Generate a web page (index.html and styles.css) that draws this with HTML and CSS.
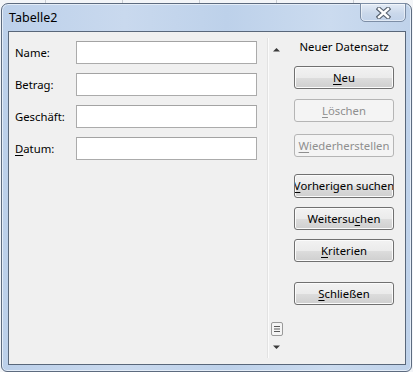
FILE: index.html
```html
<!DOCTYPE html>
<html>
<head>
    <title>Tabelle2</title>
    <link rel="stylesheet" href="styles.css">
</head>
<body>
    <div class="window">
        <div class="titlebar">
            <span class="title">Tabelle2</span>
            <button class="close" type="button">
                <svg width="15" height="12" viewBox="0 0 15 12">
                    <path d="M3 2 L12 10 M12 2 L3 10" stroke="#56616f" stroke-width="4.6" stroke-linecap="square" fill="none"/>
                    <path d="M3 2 L12 10 M12 2 L3 10" stroke="#ffffff" stroke-width="2.4" stroke-linecap="square" fill="none"/>
                </svg>
            </button>
        </div>
        <div class="client">
            <form class="record" autocomplete="off">
                <div class="row">
                    <label>Name:</label>
                    <input type="text">
                </div>
                <div class="row">
                    <label>Betrag:</label>
                    <input type="text">
                </div>
                <div class="row">
                    <label>Geschäft:</label>
                    <input type="text">
                </div>
                <div class="row">
                    <label><u>D</u>atum:</label>
                    <input type="text">
                </div>
            </form>
            <div class="scroll">
                <svg class="arrow" width="9" height="5" viewBox="0 0 9 5"><path d="M1 4.5 L4.5 1 L8 4.5 Z" fill="#3a3a3a"/></svg>
                <div class="spacer"></div>
                <svg class="thumb" width="12" height="14" viewBox="0 0 12 14">
                    <rect x="0.5" y="0.5" width="11" height="13" rx="1.5" fill="#f4f4f4" stroke="#9a9a9a"/>
                    <path d="M3 4.5 H9 M3 7 H9 M3 9.5 H9" stroke="#5a5a5a" stroke-width="1"/>
                </svg>
                <svg class="arrow down" width="9" height="5" viewBox="0 0 9 5"><path d="M1 0.5 L4.5 4 L8 0.5 Z" fill="#3a3a3a"/></svg>
            </div>
            <div class="panel">
                <div class="status">Neuer Datensatz</div>
                <button class="btn btn-new" type="button"><span><u>N</u>eu</span></button>
                <button class="btn btn-delete" type="button" disabled><span><u>L</u>öschen</span></button>
                <button class="btn btn-restore" type="button" disabled><span><u>W</u>iederherstellen</span></button>
                <button class="btn btn-prev" type="button"><span><u>V</u>orherigen suchen</span></button>
                <button class="btn btn-next" type="button"><span>Weitersu<u>c</u>hen</span></button>
                <button class="btn btn-criteria" type="button"><span><u>K</u>riterien</span></button>
                <button class="btn btn-close" type="button"><span><u>S</u>chließen</span></button>
            </div>
        </div>
    </div>
</body>
</html>
```

FILE: styles.css
```css
html, body {
    margin: 0;
    padding: 0;
}

body {
    width: 413px;
    height: 372px;
    overflow: hidden;
    background-color: #f3f5f8;
    background-image: repeating-linear-gradient(90deg, transparent 0 45px, #c9cdd3 45px 46px, transparent 46px 77px);
    font-family: "Noto Sans", "Open Sans", sans-serif;
    font-size: 11.3px;
    color: #000;
}

.window {
    box-sizing: border-box;
    width: 411px;
    height: 369px;
    margin: 3px 0 0 1px;
    border: 1px solid #5d6b7f;
    border-radius: 7px 7px 6px 6px;
    background: linear-gradient(90deg, #bcd0ea 0%, #c9d9ee 30%, #bdd1ea 55%, #cbdbef 80%, #bfd2ea 100%);
    box-shadow: inset 0 0 0 1px #e4edf8;
    display: flex;
    flex-direction: column;
}

.titlebar {
    height: 27px;
    display: flex;
    align-items: flex-start;
    padding: 0 5px 0 7px;
}

.title {
    padding-top: 6px;
    line-height: 16px;
    font-size: 12.5px;
}

.close {
    margin-left: auto;
    margin-top: -1px;
    width: 46px;
    height: 19px;
    padding: 0;
    border: 1px solid #7d8ea6;
    border-radius: 0 0 5px 5px;
    background: linear-gradient(#e3ebf6, #cad8eb 55%, #c2d3ea);
    box-shadow: inset 0 0 0 1px rgba(255, 255, 255, 0.5);
    display: flex;
    align-items: center;
    justify-content: center;
}

.client {
    box-sizing: border-box;
    width: 398px;
    height: 334px;
    margin-left: 6px;
    border: 1px solid #59677a;
    background: #f0f0f0;
    display: flex;
}

.record {
    box-sizing: border-box;
    width: 258px;
    margin: 0;
    padding: 9px 0 0 6px;
    display: flex;
    flex-direction: column;
    gap: 9px;
}

.row {
    display: flex;
    align-items: center;
    height: 23px;
}

.row label {
    width: 61px;
    padding-bottom: 1px;
}

.row input {
    box-sizing: border-box;
    width: 181px;
    height: 23px;
    margin: 0;
    border: 1px solid #ababab;
    border-top-color: #a3a3a3;
    background: #fff;
    font: inherit;
}

u {
    text-decoration-thickness: 1px;
    text-underline-offset: 2px;
}

.scroll {
    box-sizing: border-box;
    width: 18px;
    margin: 6px 0;
    border-left: 1px solid #e2e2e2;
    box-shadow: inset 1px 0 0 #fbfbfb;
    display: flex;
    flex-direction: column;
    align-items: center;
    padding: 9px 0 8px 0;
}

.spacer {
    flex: 1;
}

.thumb {
    margin-bottom: 9px;
    margin-left: 1px;
}

.panel {
    flex: 1;
    padding: 7px 0 0 9px;
    display: flex;
    flex-direction: column;
}

.status {
    width: 100px;
    line-height: 16px;
    text-align: center;
}

.btn {
    box-sizing: border-box;
    width: 100px;
    height: 23px;
    padding: 0;
    border: 1px solid #707070;
    border-radius: 3px;
    background: linear-gradient(#f2f2f2 0%, #ebebeb 50%, #dddddd 51%, #cfcfcf 100%);
    box-shadow: inset 0 0 0 1px #fbfbfb;
    font: inherit;
    color: #000;
    display: flex;
    align-items: center;
    justify-content: center;
    overflow: hidden;
    white-space: nowrap;
}

.btn span {
    flex: none;
    padding-bottom: 1px;
}

.btn:disabled {
    border-color: #b5b5b5;
    background: #f4f4f4;
    box-shadow: none;
    color: #8f8f8f;
}

.btn-new { margin-top: 11px; }
.btn-delete { margin-top: 10px; }
.btn-restore { margin-top: 12px; }
.btn-prev { margin-top: 17px; height: 24px; }
.btn-next { margin-top: 9px; }
.btn-criteria { margin-top: 9px; }
.btn-close { margin-top: 20px; }
```
